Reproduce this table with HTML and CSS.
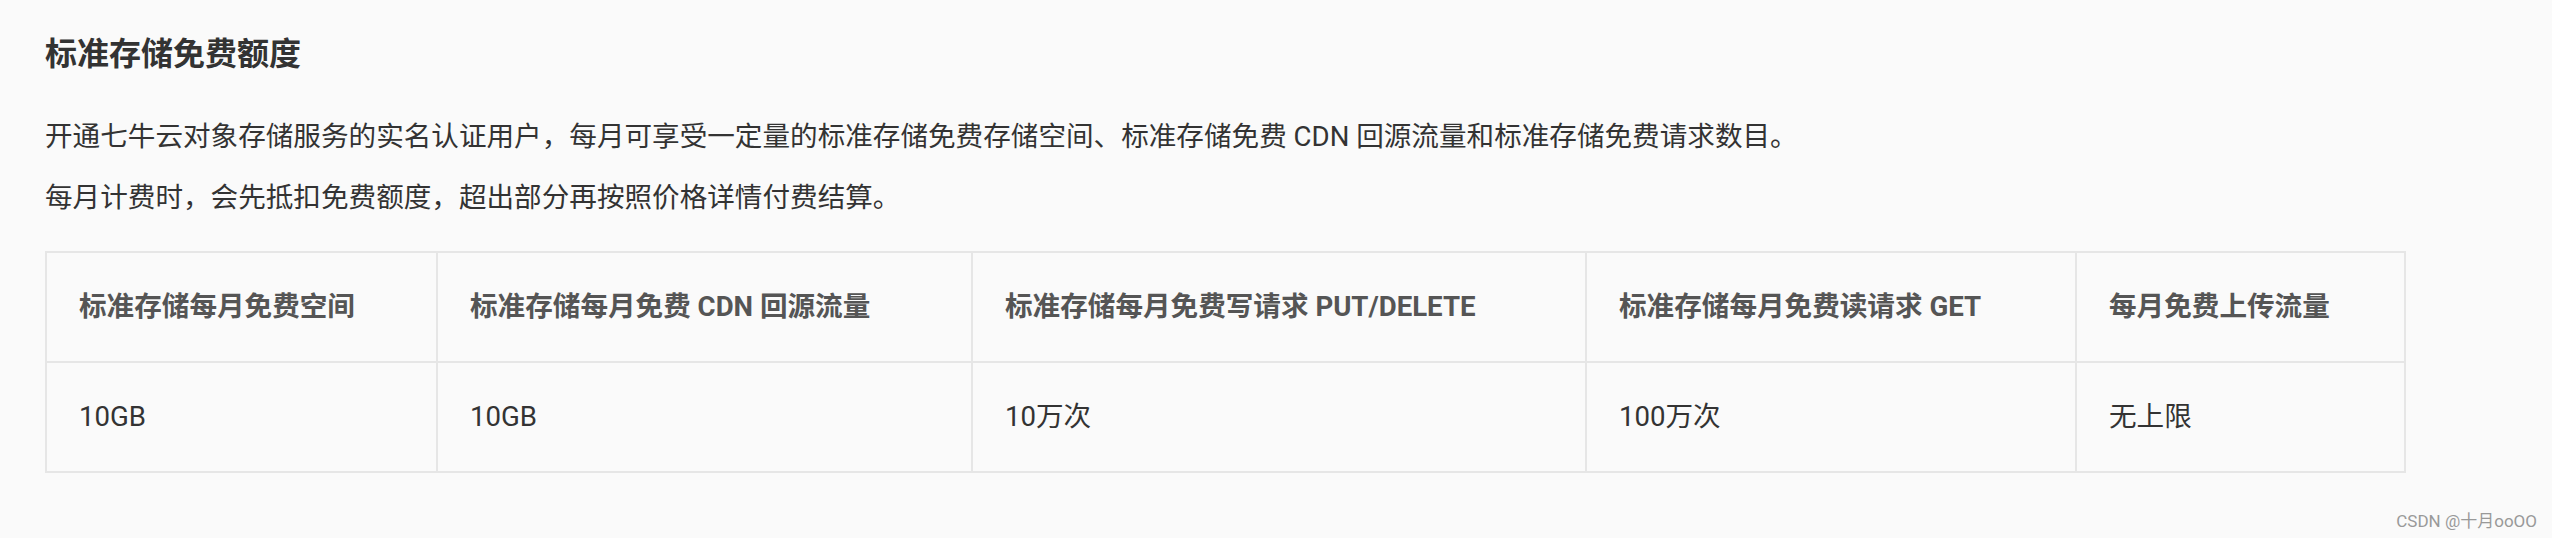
FILE: index.html
```html
<!doctype html>
<html lang="zh-CN">
  <head>
    <meta charset="UTF-8" />
    <meta name="viewport" content="width=device-width, initial-scale=1.0" />
    <link rel="stylesheet" href="styles.css">
    <title>标准存储免费额度</title>
  </head>
  <body>
    <div class="doc">
      <h2 class="doc-title">标准存储免费额度</h2>
      <p>开通七牛云对象存储服务的实名认证用户，每月可享受一定量的标准存储免费存储空间、标准存储免费 CDN 回源流量和标准存储免费请求数目。</p>
      <p>每月计费时，会先抵扣免费额度，超出部分再按照价格详情付费结算。</p>
      <!-- Free quota table -->
      <table class="quota">
        <colgroup>
          <col class="c1" />
          <col class="c2" />
          <col class="c3" />
          <col class="c4" />
          <col class="c5" />
        </colgroup>
        <thead>
          <tr>
            <th>标准存储每月免费空间</th>
            <th>标准存储每月免费 CDN 回源流量</th>
            <th>标准存储每月免费写请求 PUT/DELETE</th>
            <th>标准存储每月免费读请求 GET</th>
            <th>每月免费上传流量</th>
          </tr>
        </thead>
        <tbody>
          <tr>
            <td>10GB</td>
            <td>10GB</td>
            <td>10万次</td>
            <td>100万次</td>
            <td>无上限</td>
          </tr>
        </tbody>
      </table>
    </div>
    <div class="watermark">CSDN @十月ooOO</div>
  </body>
</html>
```

FILE: styles.css
```css
html,
body {
  margin: 0;
  height: 100%;
}

body {
  background: #fafafa;
  color: #333;
  font-family: Roboto, "Noto Sans CJK SC", sans-serif;
  font-size: 27.6px;
}

.doc {
  padding: 30px 0 0 45px;
}

.doc-title {
  margin: 0;
  font-size: 32px;
  line-height: 48px;
  font-weight: 700;
  color: #333;
}

.doc p {
  margin: 17px 0 0;
  line-height: 44px;
}

.doc .doc-title + p {
  margin-top: 37px;
}

.quota {
  margin-top: 31px;
  border-collapse: collapse;
  table-layout: fixed;
  width: 2359px;
  border: 2px solid #e6e6e6;
}

.quota col.c1 { width: 391px; }
.quota col.c2 { width: 535px; }
.quota col.c3 { width: 614px; }
.quota col.c4 { width: 490px; }
.quota col.c5 { width: 329px; }

.quota th,
.quota td {
  border: 2px solid #e6e6e6;
  height: 108px;
  padding: 0 32px;
  text-align: left;
  vertical-align: middle;
  white-space: nowrap;
  line-height: 40px;
}

.quota th {
  font-weight: 700;
  color: #555;
}

.quota td {
  color: #333;
}

.watermark {
  position: absolute;
  right: 15px;
  bottom: 6px;
  font-size: 17px;
  color: #999;
}
```
